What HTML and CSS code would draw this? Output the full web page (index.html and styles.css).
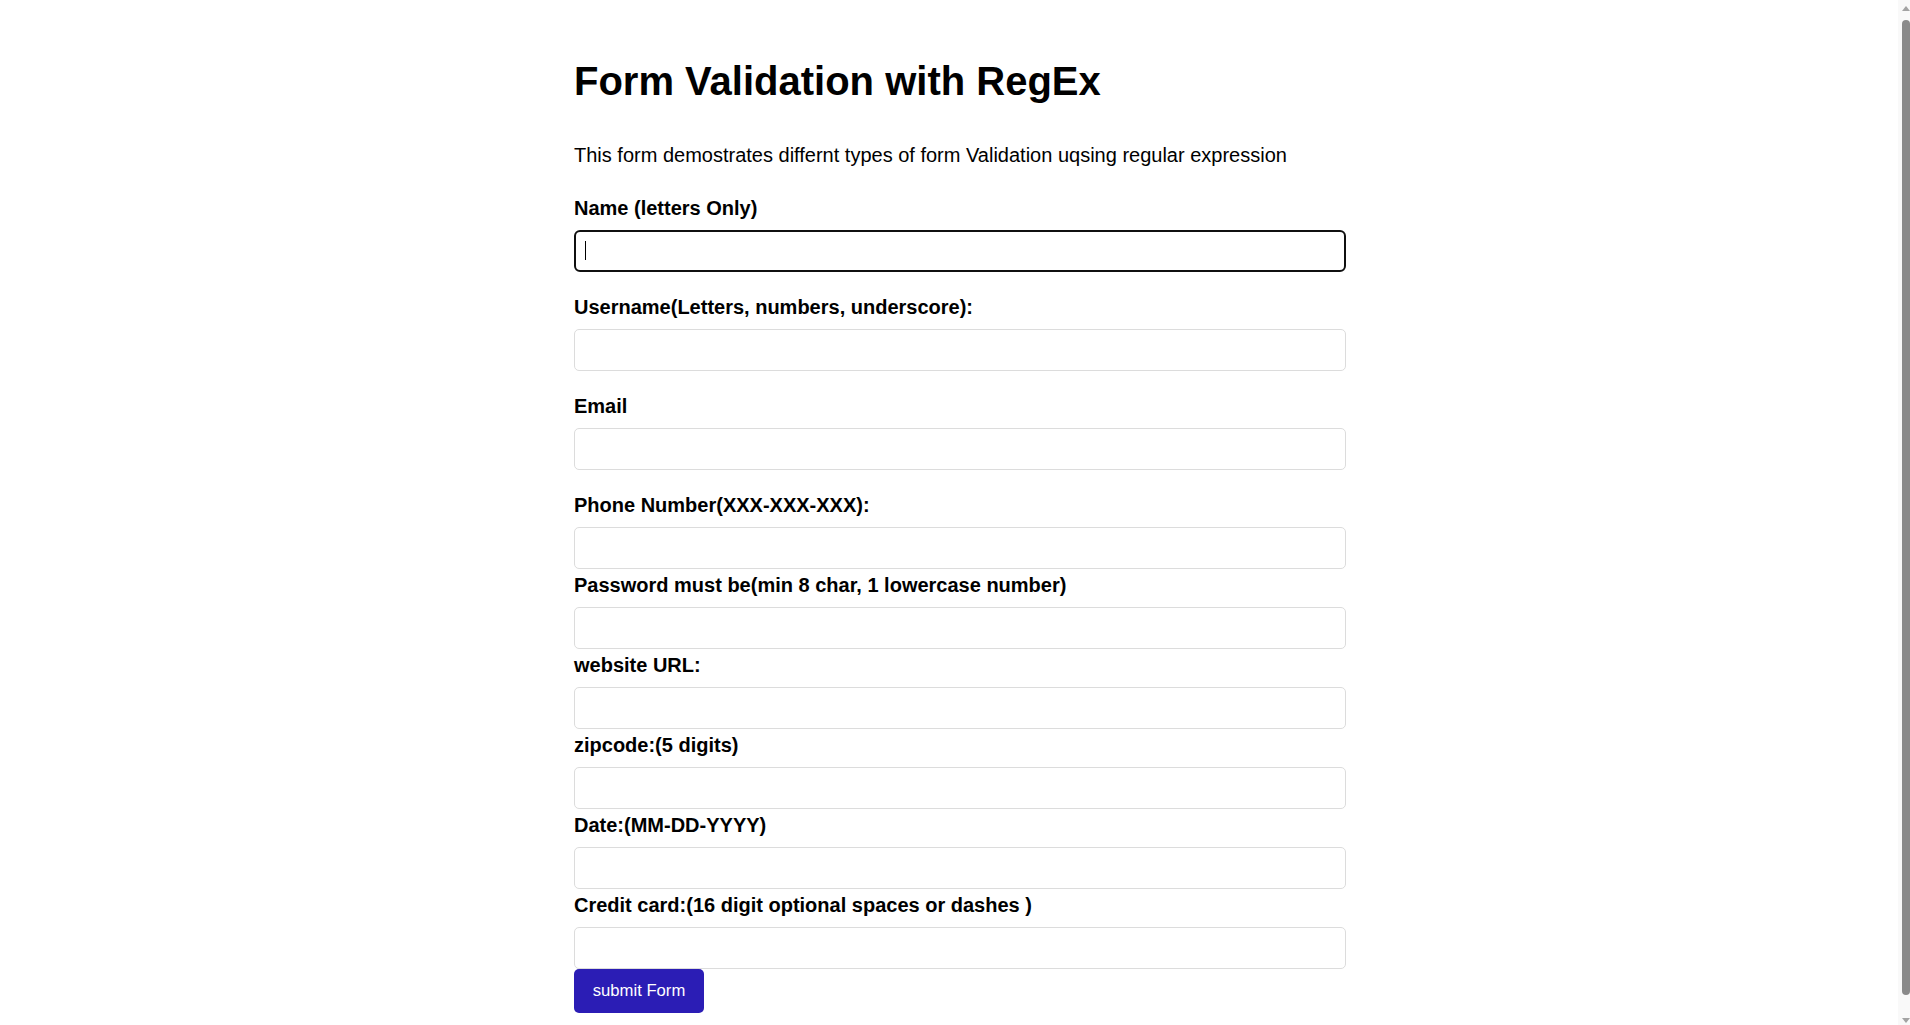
FILE: index.html
```html
<!DOCTYPE html>
<html lang="en">
<head>
<meta charset="utf-8">
<title>Form Validation with RegEx</title>
<link rel="stylesheet" href="styles.css">
</head>
<body>
<div class="page">
  <div class="container">
    <h1 class="title">Form Validation with RegEx</h1>
    <p class="intro">This form demostrates differnt types of form Validation uqsing regular expression</p>
    <form class="form" onsubmit="return false;">
      <div class="field field--spaced">
        <label class="label" for="name">Name (letters Only)</label>
        <div class="input-wrap">
          <input class="input input--focus" id="name" type="text">
          <span class="caret"></span>
        </div>
      </div>
      <div class="field field--spaced">
        <label class="label" for="username">Username(Letters, numbers, underscore):</label>
        <input class="input" id="username" type="text">
      </div>
      <div class="field field--spaced">
        <label class="label" for="email">Email</label>
        <input class="input" id="email" type="text">
      </div>
      <div class="field">
        <label class="label" for="phone">Phone Number(XXX-XXX-XXX):</label>
        <input class="input" id="phone" type="text">
      </div>
      <div class="field">
        <label class="label" for="password">Password must be(min 8 char, 1 lowercase number)</label>
        <input class="input" id="password" type="password">
      </div>
      <div class="field">
        <label class="label" for="url">website URL:</label>
        <input class="input" id="url" type="text">
      </div>
      <div class="field">
        <label class="label" for="zip">zipcode:(5 digits)</label>
        <input class="input" id="zip" type="text">
      </div>
      <div class="field">
        <label class="label" for="date">Date:(MM-DD-YYYY)</label>
        <input class="input" id="date" type="text">
      </div>
      <div class="field">
        <label class="label" for="card">Credit card:(16 digit optional spaces or dashes )</label>
        <input class="input" id="card" type="text">
      </div>
      <button class="submit" type="submit">submit Form</button>
    </form>
  </div>
</div>
<div class="scrollbar" aria-hidden="true">
  <span class="scrollbar__arrow scrollbar__arrow--up"></span>
  <span class="scrollbar__thumb"></span>
  <span class="scrollbar__arrow scrollbar__arrow--down"></span>
</div>
</body>
</html>
```
FILE: styles.css
```css
html, body {
  margin: 0;
  padding: 0;
  height: 100%;
  overflow: hidden;
  background: #ffffff;
}

body {
  font-family: "Liberation Sans", Arial, sans-serif;
  color: #000000;
}

.page {
  margin-right: 12px;
}

.container {
  max-width: 750px;
  margin: 0 auto;
  padding: 0 25px;
}

.title {
  font-size: 40px;
  line-height: 46px;
  font-weight: bold;
  margin: 58px 0 0;
}

.intro {
  font-size: 20px;
  line-height: 23px;
  margin: 40px 0 0;
}

.form {
  margin-top: 29.6px;
}

.label {
  display: block;
  font-size: 20px;
  line-height: 23px;
  font-weight: bold;
  margin-bottom: 10px;
}

.field + .field {
  margin-top: 5px;
}

.field--spaced {
  margin-bottom: 24.3px;
}

.input-wrap {
  position: relative;
}

.input {
  display: block;
  box-sizing: border-box;
  width: calc(100% + 22px);
  height: 42px;
  margin: 0;
  padding: 0 10px;
  border: 1.25px solid #dcdcdc;
  border-radius: 5px;
  background: #ffffff;
  font-family: "Liberation Sans", Arial, sans-serif;
  font-size: 16.67px;
  color: #000;
  outline: none;
}

.input--focus {
  border: 2px solid #101010;
  border-radius: 6px;
}

.caret {
  position: absolute;
  left: 11px;
  top: 11px;
  width: 1px;
  height: 19px;
  background: #000000;
}

.submit {
  display: block;
  box-sizing: border-box;
  height: 44px;
  margin: 0;
  padding: 0 18.75px;
  border: none;
  border-radius: 5px;
  background: #2b1db5;
  color: #ffffff;
  font-family: "Liberation Sans", Arial, sans-serif;
  font-size: 16.67px;
  line-height: 20px;
  cursor: pointer;
}

.scrollbar {
  position: fixed;
  top: 0;
  right: 0;
  width: 12px;
  height: 100%;
  background: #f9f9f9;
}

.scrollbar__thumb {
  position: absolute;
  top: 20px;
  bottom: 30px;
  left: 4px;
  width: 8px;
  border-radius: 4px;
  background: #8a8a8a;
}

.scrollbar__arrow {
  position: absolute;
  left: 4px;
  width: 0;
  height: 0;
  border-left: 4px solid transparent;
  border-right: 4px solid transparent;
}

.scrollbar__arrow--up {
  top: 6px;
  border-bottom: 5px solid #a3a3a3;
}

.scrollbar__arrow--down {
  bottom: 2px;
  border-top: 5px solid #a3a3a3;
}
```
